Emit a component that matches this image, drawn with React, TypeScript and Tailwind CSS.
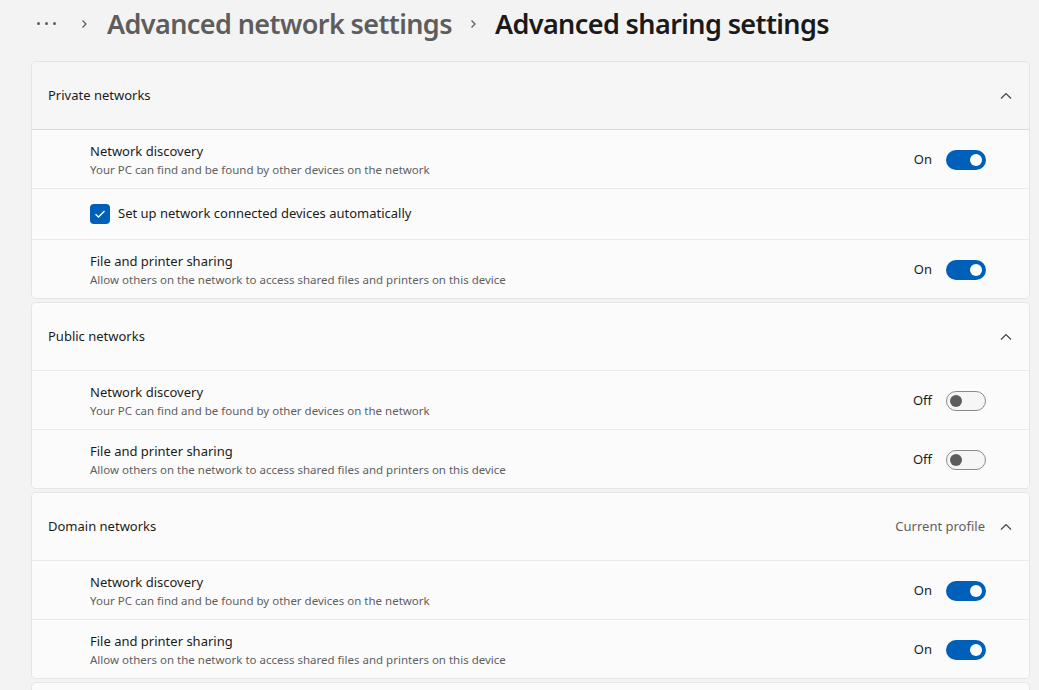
import React from "react";

const font = { fontFamily: '"Segoe UI", "Noto Sans", sans-serif' };

function Toggle({ on }: { on: boolean }) {
  return on ? (
    <div className="w-[40px] h-[20px] rounded-full bg-[#005fb8] flex items-center justify-end pr-[4px]">
      <div className="w-[12px] h-[12px] rounded-full bg-white" />
    </div>
  ) : (
    <div className="w-[40px] h-[20px] rounded-full border border-[#8a8a8a] bg-[#f6f6f6] flex items-center pl-[3px]">
      <div className="w-[12px] h-[12px] rounded-full bg-[#5d5d5d]" />
    </div>
  );
}

function ChevronUp() {
  return (
    <svg width="12" height="8" viewBox="0 0 12 8" fill="none">
      <path d="M1 6.5 L6 1.5 L11 6.5" stroke="#444" strokeWidth="1.2" />
    </svg>
  );
}

function SettingRow({ title, sub, on, last }: { title: string; sub: string; on: boolean; last?: boolean }) {
  return (
    <div className={`${last ? "h-[58px]" : "h-[59px] border-b border-[#ebebeb]"} flex items-center pt-[2px] pl-[58px] pr-[43px] bg-[#fbfbfb]`}>
      <div className="flex-1 flex flex-col">
        <span className="text-[13px] leading-[19px] text-[#1b1b1b]">{title}</span>
        <span className="text-[11.5px] leading-[17px] text-[#5f5f5f]">{sub}</span>
      </div>
      <span className="text-[13px] text-[#1b1b1b] mr-[14px]">{on ? "On" : "Off"}</span>
      <Toggle on={on} />
    </div>
  );
}

function Header({ title, extra, dark }: { title: string; extra?: string; dark?: boolean }) {
  return (
    <div className={`h-[68px] flex items-center pt-[1px] pl-[16px] pr-[17px] ${dark ? "bg-[#f6f6f6] border-b border-[#d9d9d9]" : "bg-[#fbfbfb] border-b border-[#ebebeb]"}`}>
      <span className="flex-1 text-[13px] text-[#1b1b1b]">{title}</span>
      {extra && <span className="text-[13px] text-[#5f5f5f] mr-[15px]">{extra}</span>}
      <ChevronUp />
    </div>
  );
}

function Crumb() {
  return (
    <svg width="7" height="12" viewBox="0 0 7 12" fill="none">
      <path d="M1.5 2.5 L5 6 L1.5 9.5" stroke="#5d5d5d" strokeWidth="1.3" />
    </svg>
  );
}

const ND = "Network discovery";
const NDS = "Your PC can find and be found by other devices on the network";
const FP = "File and printer sharing";
const FPS = "Allow others on the network to access shared files and printers on this device";

export default function App() {
  return (
    <div className="w-[1039px] h-[690px] overflow-hidden bg-[#f3f3f3] pl-[31px] pr-[9px]" style={font}>
      <div className="h-[48px] flex items-center">
        <div className="flex items-center gap-[5px] ml-[6px] mt-[-2px]">
          <div className="w-[3px] h-[3px] rounded-full bg-[#5d5d5d]" />
          <div className="w-[3px] h-[3px] rounded-full bg-[#5d5d5d]" />
          <div className="w-[3px] h-[3px] rounded-full bg-[#5d5d5d]" />
        </div>
        <div className="ml-[25px]"><Crumb /></div>
        <span className="ml-[19px] text-[27px] leading-[36px] text-[#5d5d5d] font-semibold tracking-[-0.6px]">Advanced network settings</span>
        <div className="ml-[18px]"><Crumb /></div>
        <span className="ml-[18px] text-[27px] leading-[36px] text-[#1a1a1a] font-semibold tracking-[-0.6px]">Advanced sharing settings</span>
      </div>
      <div className="mt-[13px] flex flex-col gap-[3px]">
        <div className="rounded-[5px] border border-[#e5e5e5] overflow-hidden">
          <Header title="Private networks" dark />
          <SettingRow title={ND} sub={NDS} on />
          <div className="h-[51px] flex items-center pl-[58px] bg-[#fbfbfb] border-b border-[#ebebeb]">
            <div className="w-[20px] h-[20px] rounded-[4px] bg-[#005fb8] flex items-center justify-center">
              <svg width="12" height="10" viewBox="0 0 12 10" fill="none">
                <path d="M1.5 5.2 L4.5 8 L10.5 2" stroke="white" strokeWidth="1.3" />
              </svg>
            </div>
            <span className="ml-[8px] text-[13px] text-[#1b1b1b]">Set up network connected devices automatically</span>
          </div>
          <SettingRow title={FP} sub={FPS} on last />
        </div>
        <div className="rounded-[5px] border border-[#e5e5e5] overflow-hidden">
          <Header title="Public networks" />
          <SettingRow title={ND} sub={NDS} on={false} />
          <SettingRow title={FP} sub={FPS} on={false} last />
        </div>
        <div className="rounded-[5px] border border-[#e5e5e5] overflow-hidden">
          <Header title="Domain networks" extra="Current profile" />
          <SettingRow title={ND} sub={NDS} on />
          <SettingRow title={FP} sub={FPS} on last />
        </div>
        <div className="rounded-[5px] border border-[#e5e5e5] h-[60px] bg-[#fbfbfb]" />
      </div>
    </div>
  );
}
